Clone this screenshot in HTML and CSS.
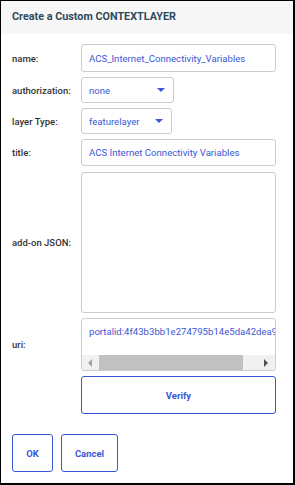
FILE: index.html
```html
<!DOCTYPE html>
<html lang="en">
<head>
  <meta charset="UTF-8">
  <title>Create a Custom CONTEXTLAYER</title>
  <link rel="stylesheet" href="styles.css">
</head>
<body>
  <div class="dialog">
    <div class="dialog-header">Create a Custom CONTEXTLAYER</div>
    <div class="dialog-body">
      <div class="form">
        <label class="lbl">name:</label>
        <div class="field h-name">ACS_Internet_Connectivity_Variables</div>

        <label class="lbl">authorization:</label>
        <div class="field select h-sel auth">none<span class="caret"></span></div>

        <label class="lbl">layer Type:</label>
        <div class="field select h-sel ltype">featurelayer<span class="caret"></span></div>

        <label class="lbl">title:</label>
        <div class="field h-title">ACS Internet Connectivity Variables</div>

        <label class="lbl">add-on JSON:</label>
        <div class="field area h-json"></div>

        <label class="lbl">uri:</label>
        <div class="field uri h-uri">
          <div class="uri-text">portalid:4f43b3bb1e274795b14e5da42dea9c1d</div>
          <div class="hscroll">
            <span class="arrow left"></span>
            <span class="track"><span class="thumb"></span></span>
            <span class="arrow right"></span>
          </div>
        </div>

        <span></span>
        <button class="btn verify" type="button">Verify</button>
      </div>
      <div class="actions">
        <button class="btn ok" type="button">OK</button>
        <button class="btn cancel" type="button">Cancel</button>
      </div>
    </div>
  </div>
</body>
</html>
```

FILE: styles.css
```css
/* Base */
html, body {
  margin: 0;
  padding: 0;
  background: #fff;
}
body {
  font-family: Roboto, "Liberation Sans", Arial, sans-serif;
  font-size: 9.5px;
  color: #333;
}
.dialog {
  box-sizing: border-box;
  width: 295px;
  height: 485px;
  border: 1px solid #000;
  border-right-width: 2px;
  border-bottom-width: 2px;
  background: #fff;
}
/* Header */
.dialog-header {
  height: 33px;
  background: #f7f7f7;
  padding: 9px 0 0 11px;
  box-sizing: border-box;
  font-size: 10.8px;
  font-weight: bold;
  color: #2e4a5c;
}
.dialog-body {
  padding: 10px 16px 0 11px;
}
/* Form grid */
.form {
  display: grid;
  grid-template-columns: 69px 195px;
  row-gap: 5px;
  align-items: center;
}
.lbl {
  font-weight: 500;
  color: #333;
}
.field {
  box-sizing: border-box;
  border: 1px solid #ccc;
  border-radius: 3px;
  padding: 0 7px;
  color: #3a58d6;
  font-size: 9.6px;
  display: flex;
  align-items: center;
  white-space: nowrap;
}
.h-name { height: 28px; }
.h-sel { height: 26px; }
.h-title { height: 27px; }
.h-json { height: 141px; margin-top: 1px; }
.h-uri { height: 53px; }
.select {
  justify-content: space-between;
}
.select.auth { width: 93px; }
.select.ltype { width: 91px; }
.caret {
  width: 0;
  height: 0;
  border-left: 4px solid transparent;
  border-right: 4px solid transparent;
  border-top: 4px solid #3a58d6;
  margin-right: 1px;
}
/* Uri with horizontal scrollbar */
.uri {
  display: flex;
  flex-direction: column;
  align-items: stretch;
  padding: 0;
  overflow: hidden;
}
.uri-text {
  flex: 1;
  padding: 7px 0 0 7px;
  overflow: hidden;
}
.hscroll {
  display: flex;
  align-items: center;
  height: 15px;
  background: #f1f1f1;
}
.arrow {
  width: 0;
  height: 0;
  border-top: 4px solid transparent;
  border-bottom: 4px solid transparent;
}
.arrow.left {
  border-right: 4px solid #a3a3a3;
  margin: 0 7px 0 6px;
}
.arrow.right {
  border-left: 4px solid #505050;
  margin: 0 7px 0 21px;
}
.track {
  flex: 1;
  height: 15px;
  display: flex;
  align-items: center;
}
.thumb {
  width: 144px;
  height: 15px;
  background: #c1c1c1;
}
/* Buttons */
.btn {
  box-sizing: border-box;
  height: 38px;
  background: #fff;
  border: 1px solid #3a58d6;
  border-radius: 3px;
  color: #3a58d6;
  font-family: Roboto, "Liberation Sans", Arial, sans-serif;
  font-size: 9.5px;
  font-weight: bold;
  cursor: pointer;
}
.verify {
  width: 195px;
}
.actions {
  display: flex;
  gap: 8px;
  margin-top: 20px;
}
.ok { width: 41px; }
.cancel { width: 57px; }
```
